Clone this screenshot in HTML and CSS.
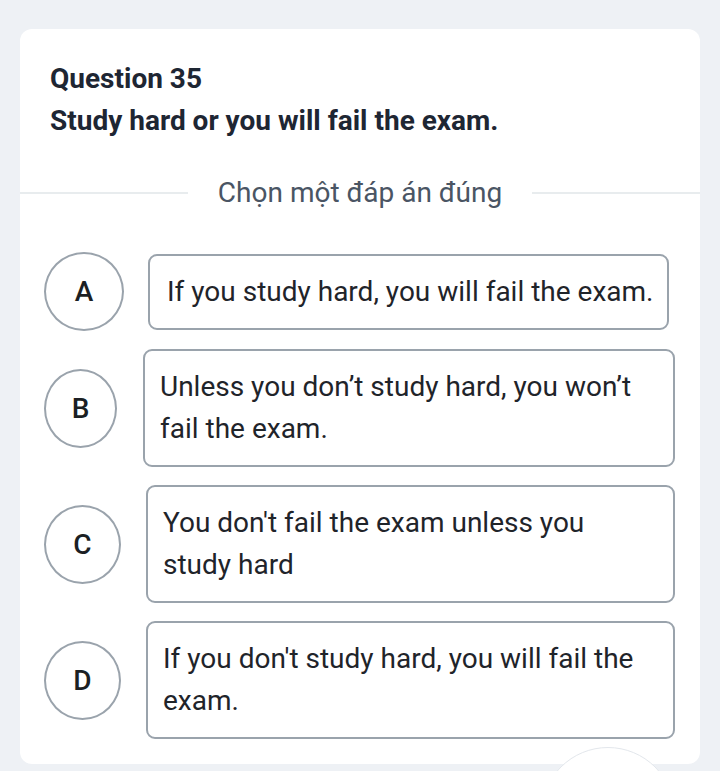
FILE: index.html
```html
<!DOCTYPE html>
<html lang="vi">
<head>
<meta charset="utf-8">
<link rel="stylesheet" href="styles.css">
</head>
<body>
<div class="card">
  <div class="head">
    <div class="qnum">Question 35</div>
    <div class="qtext">Study hard or you will fail the exam.</div>
  </div>
  <div class="sep"><span class="line"></span><span class="sep-text">Chọn một đáp án đúng</span><span class="line"></span></div>
  <div class="options">
    <div class="opt opt-a">
      <div class="letter">A</div>
      <div class="box">If you study hard, you will fail the exam.</div>
    </div>
    <div class="opt opt-b">
      <div class="letter">B</div>
      <div class="box">Unless you don’t study hard, you won’t fail the exam.</div>
    </div>
    <div class="opt opt-c">
      <div class="letter">C</div>
      <div class="box">You don't fail the exam unless you study hard</div>
    </div>
    <div class="opt opt-d">
      <div class="letter">D</div>
      <div class="box">If you don't study hard, you will fail the exam.</div>
    </div>
  </div>
</div>
<div class="fab-clip"><div class="fab"></div></div>
</body>
</html>
```

FILE: styles.css
```css
html, body {
  margin: 0;
  padding: 0;
}
body {
  background: #eef1f5;
  font-family: Roboto, "Noto Sans", sans-serif;
  width: 720px;
  height: 771px;
  overflow: hidden;
  position: relative;
}
.card {
  margin: 29px 20px 0;
  background: #ffffff;
  border-radius: 12px;
  height: 735px;
  padding-top: 29px;
  box-sizing: border-box;
}
.head {
  padding: 0 30px;
  color: #1e2633;
  font-weight: 700;
  font-size: 28px;
  line-height: 42px;
}
.sep {
  display: flex;
  align-items: center;
  margin-top: 30px;
  height: 42px;
}
.line {
  flex: 1;
  height: 2px;
  background: #e8ecee;
}
.sep-text {
  padding: 0 30px;
  font-size: 28px;
  color: #4a5564;
  line-height: 42px;
}
.options {
  margin-top: 38px;
  padding: 0 25px 0 24px;
  display: flex;
  flex-direction: column;
  gap: 18px;
}
.opt {
  display: flex;
  align-items: center;
}
.letter {
  height: 79px;
  border: 2px solid #9aa3ac;
  border-radius: 50%;
  box-sizing: border-box;
  display: flex;
  align-items: center;
  justify-content: center;
  font-size: 28px;
  font-weight: 500;
  color: #1b1f24;
  flex: none;
}
.box {
  border: 2px solid #9aa3ac;
  border-radius: 9px;
  padding: 15px;
  font-size: 28px;
  line-height: 42px;
  color: #1f242a;
}
.opt-a .letter { width: 80px; }
.opt-a .box { margin-left: 24px; white-space: nowrap; padding: 15px 14px 15px 17px; }
.opt-b .letter { width: 73px; }
.opt-b .box { margin-left: 26px; flex: 1; }
.opt-c .letter, .opt-d .letter { width: 77px; }
.opt-c .box, .opt-d .box { margin-left: 25px; flex: 1; }
.opt-b .box, .opt-c .box, .opt-d .box { padding-right: 30px; }
.fab-clip {
  position: absolute;
  left: 530px;
  top: 746px;
  width: 160px;
  height: 25px;
  overflow: hidden;
}
.fab {
  margin: 1px 0 0 11px;
  width: 134px;
  height: 134px;
  border-radius: 50%;
  background: #ffffff;
  border: 1px solid #e3e7ec;
  box-sizing: border-box;
}
```
